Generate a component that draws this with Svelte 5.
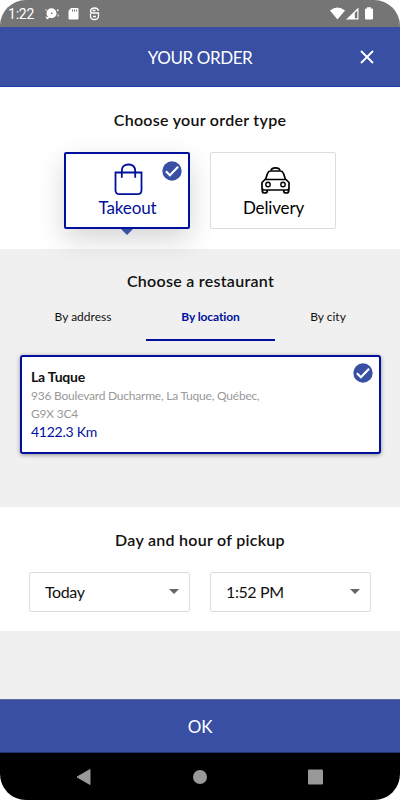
<script>
  let orderType = "takeout";
  let activeTab = "location";

  const tabs = [
    { id: "address", label: "By address" },
    { id: "location", label: "By location" },
    { id: "city", label: "By city" },
  ];
</script>

<div class="phone">
  <div class="status-bar">
    <span class="clock">1:22</span>
    <svg class="status-left" width="60" height="16" viewBox="0 0 60 16">
      <g fill="#fff">
        <circle cx="7.5" cy="7.3" r="5" />
        <path d="M1.5 10.5l4.5 1-3 2zM1 3l2 1-1 1zM13 3.5h1.5v1.5H13zM13.5 8.5h1v2h-1z" />
        <path d="M27 2h6.5q1 0 1 1v9.5q0 1-1 1h-8q-1 0-1-1V5z" />
      </g>
      <circle cx="7.8" cy="7.3" r="0.8" fill="#555" />
      <path d="M28.5 3.5v2M30.5 3.5v2M32.5 3.5v2" stroke="#757575" />
      <path
        d="M54.5 4.8q-.5-2.8-4-2.8t-4 3q0 2 2 2h6v3q0 3.5-4 3.5T46.5 10M46.5 7.5v3M49 10.5h3M48.5 4.5h3"
        fill="none"
        stroke="#fff"
        stroke-width="1.3"
      />
    </svg>
    <svg class="status-right" width="46" height="16" viewBox="0 0 46 16">
      <path d="M0 4.5Q7.5-1.5 15 4.5L7.5 13.5z" fill="#fff" />
      <path d="M28.5 1.5V13.5H16zm-1.2 3v7.8h-2.5V7z" fill="#fff" fill-rule="evenodd" />
      <path d="M37 2.5V1.2h4v1.3h1q1 0 1 1v9q0 1-1 1h-6q-1 0-1-1v-9q0-1 1-1z" fill="#fff" />
    </svg>
  </div>

  <header class="header">
    <h1>YOUR ORDER</h1>
    <button class="close" aria-label="Close">
      <svg width="14" height="14" viewBox="0 0 14 14">
        <path d="M1 1l12 12M13 1L1 13" stroke="#fff" stroke-width="1.9" />
      </svg>
    </button>
  </header>

  <section class="order-type">
    <h2>Choose your order type</h2>
    <div class="types">
      <button
        class="type"
        class:selected={orderType === "takeout"}
        on:click={() => (orderType = "takeout")}
      >
        <svg width="30" height="34" viewBox="-1 0.3 30 34" fill="none" stroke="currentColor" stroke-width="1.8">
          <path d="M1.5 9.8H27.5V27.5Q27.5 31.5 23.5 31.5H5.5Q1.5 31.5 1.5 27.5z" />
          <path d="M7.8 15V8.5Q7.8 1.8 14.5 1.8T21.2 8.500V15" />
        </svg>
        <span>Takeout</span>
        {#if orderType === "takeout"}
          <i class="check">
            <svg width="20" height="20" viewBox="0 0 20 20">
              <circle cx="10" cy="10" r="9.7" fill="#384fa3" />
              <path d="M3.9 10.3l4 4 8.2-8.5" fill="none" stroke="#fff" stroke-width="2.2" />
            </svg>
          </i>
        {/if}
      </button>
      <button
        class="type"
        class:selected={orderType === "delivery"}
        on:click={() => (orderType = "delivery")}
      >
        <svg class="taxi" width="34" height="34" viewBox="-1.5 0 34 34" fill="none" stroke="currentColor" stroke-width="1.7">
          <path d="M10.5 7.5Q11 4.8 15 4.8T19.5 7.5" />
          <path d="M5 16.5L7 10.5Q8 8 10 8H20Q22 8 23 10.5L25 16.5" />
          <path d="M4.5 16.5H25.5L28.5 19.5V25Q28.5 27 26.5 27H3.5Q1.5 27 1.5 25V19.500z" />
          <path d="M1.8 26V28Q1.800 30 4.3 30T6.8 28V27M23.2 27V28Q23.2 30 25.700 30T28.2 28V26" />
          <circle cx="7.5" cy="21.5" r="2.2" stroke-width="1.4" />
          <circle cx="22.500" cy="21.5" r="2.2" stroke-width="1.4" />
        </svg>
        <span>Delivery</span>
      </button>
    </div>
  </section>

  <section class="restaurant">
    <h2>Choose a restaurant</h2>
    <div class="tabs">
      {#each tabs as tab}
        <button class:active={activeTab === tab.id} on:click={() => (activeTab = tab.id)}>
          {tab.label}
        </button>
      {/each}
    </div>
    <div class="place">
      <h3>La Tuque</h3>
      <p>936 Boulevard Ducharme, La Tuque, Québec,<br />G9X 3C4</p>
      <span class="distance">4122.3 Km</span>
      <i class="check">
        <svg width="20" height="20" viewBox="0 0 20 20">
          <circle cx="10" cy="10" r="9.7" fill="#384fa3" />
          <path d="M3.9 10.3l4 4 8.2-8.5" fill="none" stroke="#fff" stroke-width="2.2" />
        </svg>
      </i>
    </div>
  </section>

  <section class="pickup">
    <h2>Day and hour of pickup</h2>
    <div class="selects">
      <button class="select">Today <i class="arrow"></i></button>
      <button class="select">1:52 PM <i class="arrow"></i></button>
    </div>
  </section>

  <div class="filler"></div>
  <button class="ok">OK</button>

  <nav class="nav-bar">
    <svg width="16" height="18" viewBox="0 0 16 18">
      <path d="M1 9L14 1.5V16.5z" fill="#999" stroke="#999" stroke-linejoin="round" />
    </svg>
    <svg width="16" height="18" viewBox="0 0 16 18"><circle cx="8" cy="9" r="7" fill="#999" /></svg>
    <svg width="16" height="18" viewBox="0 0 16 18">
      <rect x="1" y="1.5" width="15" height="15" rx="1" fill="#999" />
    </svg>
  </nav>
</div>

<style>
  :global(body) {
    background: #fff;
  }

  .phone {
    display: flex;
    flex-direction: column;
    width: 400px;
    height: 800px;
    overflow: hidden;
    border-radius: 26px;
    background: #f0f0f0;
    color: #111;
    font-family: Lato, sans-serif;
  }

  .phone * {
    box-sizing: border-box;
  }

  button {
    margin: 0;
    padding: 0;
    border: none;
    background: none;
    color: inherit;
    font-family: inherit;
  }

  h1,
  h2,
  h3,
  p {
    margin: 0;
  }

  i,
  svg {
    display: block;
  }

  .status-bar {
    display: flex;
    align-items: center;
    height: 27px;
    flex-shrink: 0;
    padding: 0 24px 0 8px;
    background: #757575;
    color: #fff;
  }

  .clock {
    width: 36px;
    padding-top: 1px;
    font: 14px/26px Roboto, sans-serif;
    letter-spacing: -0.2px;
  }

  .status-left {
    flex-shrink: 0;
  }

  .status-right {
    margin-left: auto;
  }

  .header {
    display: grid;
    grid-template-columns: 60px 1fr 60px;
    align-items: center;
    height: 60px;
    flex-shrink: 0;
    border-bottom: 1px solid #1b3fa2;
    background: #384fa3;
    color: #fff;
  }

  .header h1 {
    grid-column: 2;
    padding-top: 2px;
    text-align: center;
    font-size: 17px;
    font-weight: 400;
    line-height: 24px;
    letter-spacing: -0.4px;
  }

  .close {
    padding: 1px 0 0 20px;
  }

  h2 {
    text-align: center;
    font-size: 16px;
    font-weight: 600;
    line-height: 24px;
    letter-spacing: 0.28px;
  }

  .order-type {
    height: 162px;
    flex-shrink: 0;
    padding-top: 21px;
    background: #fff;
  }

  .types {
    display: flex;
    justify-content: center;
    gap: 20px;
    margin-top: 20px;
  }

  .type {
    display: flex;
    flex-direction: column;
    align-items: center;
    position: relative;
    width: 126px;
    height: 77px;
    padding: 10px 0 0 1px;
    border: 1px solid #ddd;
    border-radius: 2px;
    background: #fff;
    color: #000;
    font-size: 17px;
    line-height: 22px;
    letter-spacing: -0.15px;
  }

  .type.selected {
    padding-top: 9px;
    border: 2px solid #00109c;
    color: #00109c;
    box-shadow: 0 10px 28px rgba(0, 0, 0, 0.17);
  }

  .type.selected::after {
    content: "";
    position: absolute;
    top: 75px;
    left: 55px;
    border: 6px solid transparent;
    border-top-color: #384fa3;
    border-bottom: 0;
  }

  .taxi {
    margin-left: 4px;
  }

  .check {
    position: absolute;
    top: 7px;
    right: 6px;
  }

  .restaurant {
    height: 258px;
    flex-shrink: 0;
    padding: 20px 19px 0 20px;
  }

  .tabs {
    display: grid;
    grid-template-columns: 126px 129px 1fr;
    margin-bottom: 14px;
  }

  .tabs button {
    height: 48px;
    border-bottom: 2px solid transparent;
    font-size: 12px;
    font-weight: 400;
  }

  .tabs .active {
    border-color: #00109c;
    color: #00109c;
    font-weight: 700;
    letter-spacing: -0.1px;
  }

  .place {
    position: relative;
    height: 99px;
    padding: 10px 9px 0;
    border: 2px solid #00109c;
    border-radius: 3px;
    background: #fff;
    box-shadow: 0 1px 4px rgba(0, 0, 0, 0.4);
  }

  .place h3 {
    font-size: 14px;
    font-weight: 700;
    line-height: 20px;
    letter-spacing: -0.2px;
  }

  .place p {
    color: #999;
    font-size: 12px;
    line-height: 17.5px;
    letter-spacing: -0.22px;
  }

  .distance {
    display: block;
    color: #00109c;
    font-size: 14px;
    line-height: 19px;
    letter-spacing: -0.25px;
  }

  .place .check {
    top: 6px;
  }

  .pickup {
    height: 124px;
    flex-shrink: 0;
    padding: 21px 29px 0;
    background: #fff;
  }

  .selects {
    display: grid;
    grid-template-columns: 161px 161px;
    gap: 20px;
    margin-top: 20px;
  }

  .select {
    display: flex;
    align-items: center;
    justify-content: space-between;
    height: 40px;
    padding: 0 10px 1px 15px;
    border: 1px solid #ddd;
    border-radius: 2px;
    color: #111;
    font-size: 16px;
    letter-spacing: -0.4px;
  }

  .arrow {
    border: 5px solid transparent;
    border-top-color: #666;
    border-bottom: 0;
  }

  .filler {
    flex: 1;
  }

  .ok {
    height: 54px;
    flex-shrink: 0;
    border-top: 1px solid #5d6a97;
    border-bottom: 1px solid #203474;
    background: #384fa3;
    color: #fff;
    font-size: 17px;
    letter-spacing: -0.2px;
  }

  .nav-bar {
    display: flex;
    align-items: center;
    justify-content: space-between;
    height: 47px;
    flex-shrink: 0;
    padding: 0 77px 0 76px;
    background: #000;
  }
</style>
